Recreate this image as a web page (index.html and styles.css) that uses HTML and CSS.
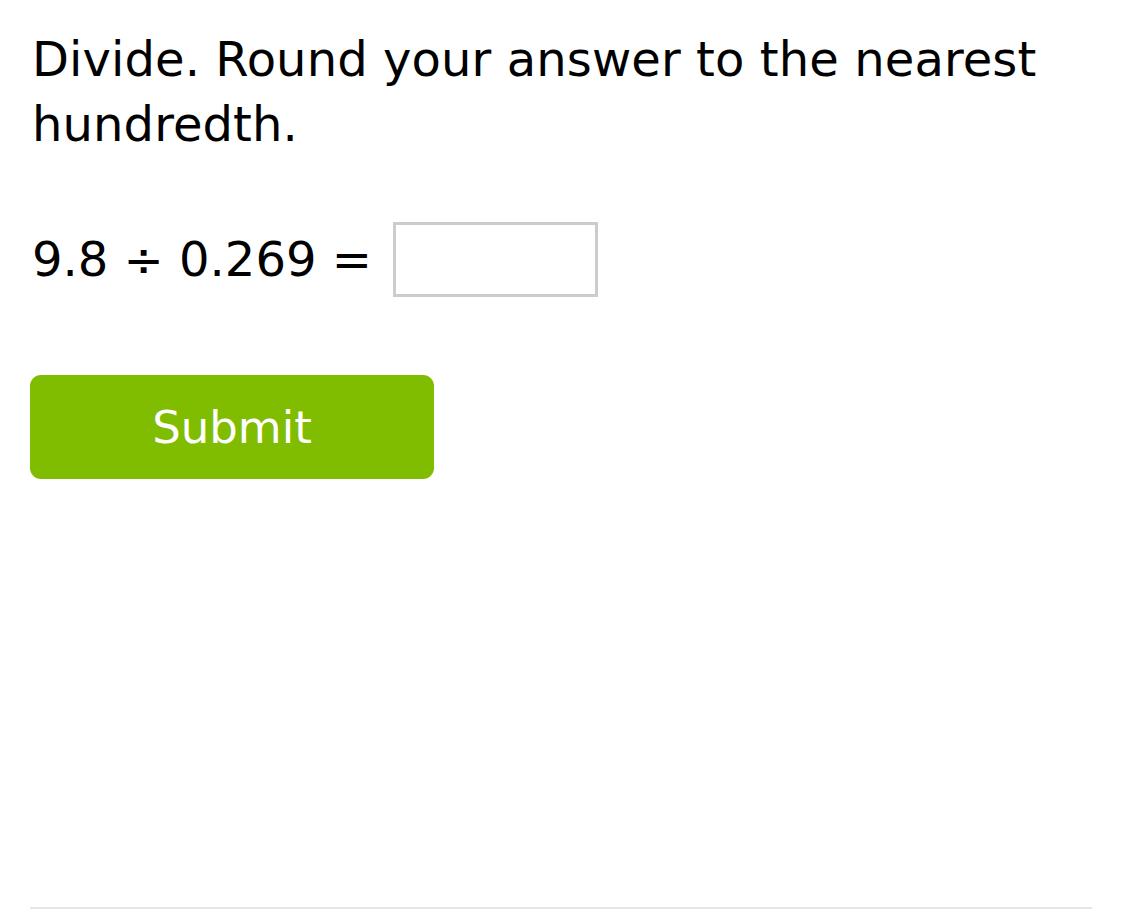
FILE: index.html
```html
<!DOCTYPE html>
<html>
<head>
<meta charset="utf-8">
<link rel="stylesheet" href="styles.css">
</head>
<body>
<main class="page">
  <p class="prompt">Divide. Round your answer to the nearest hundredth.</p>
  <div class="equation">
    <span class="expr">9.8 ÷ 0.269 =</span>
    <input class="answer" type="text" aria-label="answer">
  </div>
  <button class="submit" type="button">Submit</button>
  <div class="spacer"></div>
  <hr class="rule">
</main>
</body>
</html>
```
FILE: styles.css
```css
html, body {
  margin: 0;
  padding: 0;
  background: #ffffff;
}
.page {
  width: 1122px;
  height: 909px;
  box-sizing: border-box;
  padding: 27px 30px 0 30px;
  display: flex;
  flex-direction: column;
  font-family: "DejaVu Sans", Verdana, sans-serif;
  color: #000;
}
.prompt {
  margin: 0;
  padding-left: 2px;
  font-size: 48px;
  line-height: 65px;
  letter-spacing: 0.1px;
  width: 1040px;
}
.equation {
  display: flex;
  align-items: center;
  gap: 21px;
  margin-top: 65px;
  padding-left: 2px;
}
.expr {
  font-size: 48px;
  line-height: 75px;
  letter-spacing: 0px;
}
.answer {
  box-sizing: border-box;
  width: 205px;
  height: 75px;
  border: 3px solid #cccccc;
  margin: 0;
  padding: 0;
  background: #fff;
  outline: none;
}
.submit {
  margin-top: 78px;
  width: 404px;
  height: 104px;
  border: none;
  border-radius: 11px;
  background: #80bd00;
  color: #ffffff;
  font-family: "DejaVu Sans", Verdana, sans-serif;
  font-size: 45px;
  padding: 1px 0 0 0;
}
.spacer {
  flex: 1;
}
.rule {
  margin: 0;
  border: none;
  height: 2px;
  background: #e6e6e6;
  width: 1062px;
}
```
